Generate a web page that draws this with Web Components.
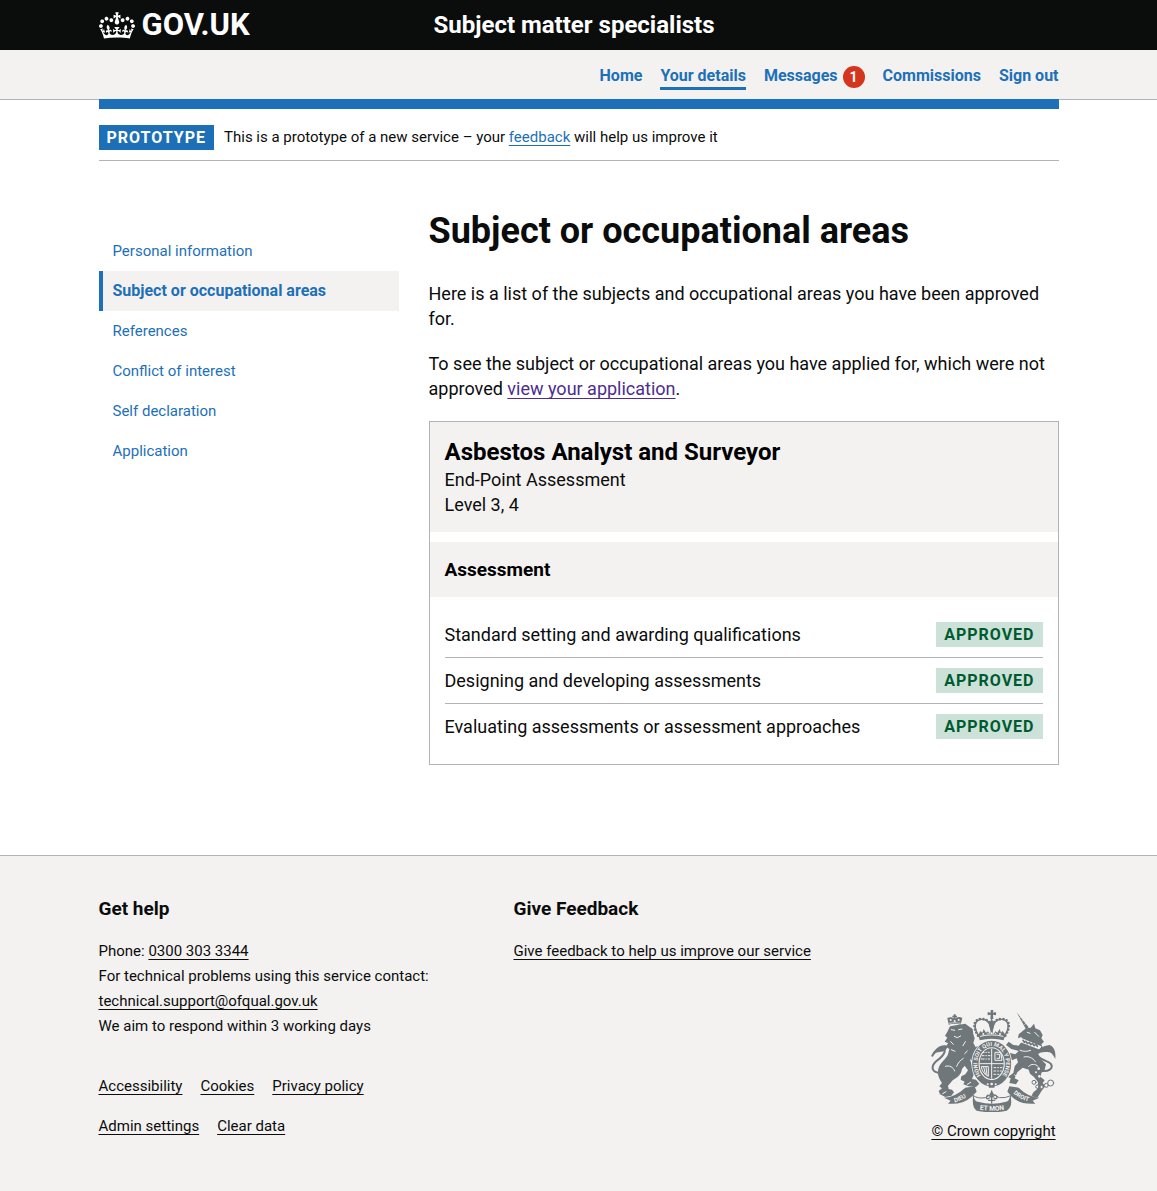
<!DOCTYPE html>
<html lang="en">
<head>
<meta charset="utf-8">
<title>Subject or occupational areas – Subject matter specialists</title>
<meta name="viewport" content="width=device-width, initial-scale=1">
<style>
  :root {
    --ink: #0b0c0c;
    --blue: #1d70b8;
    --grey: #f3f2f1;
    --line: #b1b4b6;
    --purple: #4c2c92;
  }
  body {
    margin: 0;
    min-height: 100vh;
    display: flex;
    flex-direction: column;
    background: #fff;
    color: var(--ink);
    font-family: Roboto, "Liberation Sans", sans-serif;
    font-size: 18px;
    line-height: 25px;
  }
  main { flex: 1 0 auto; }
</style>
</head>
<body>
<site-header service="Subject matter specialists"></site-header>
<account-nav></account-nav>
<phase-banner tag="PROTOTYPE">This is a prototype of a new service – your <text-link href="#feedback" tone="blue">feedback</text-link> will help us improve it</phase-banner>
<main>
  <page-columns>
    <side-nav slot="side"></side-nav>
    <area-content>
      <span slot="title">Subject or occupational areas</span>
      <approval-card name="Asbestos Analyst and Surveyor" group="Assessment">
        <span slot="meta">End-Point Assessment</span>
        <span slot="meta">Level 3, 4</span>
        <approval-row status="APPROVED">Standard setting and awarding qualifications</approval-row>
        <approval-row status="APPROVED">Designing and developing assessments</approval-row>
        <approval-row status="APPROVED">Evaluating assessments or assessment approaches</approval-row>
      </approval-card>
    </area-content>
  </page-columns>
</main>
<site-footer></site-footer>

<script>
const base = `
  *, *::before, *::after { box-sizing: border-box; }
  h1, h2, h3, p, ul { margin: 0; padding: 0; }
  ul { list-style: none; }
  .wrap { max-width: 960px; margin: 0 auto; }
`;

function define(name, markup, setup) {
  const template = document.createElement('template');
  template.innerHTML = markup.trim();
  customElements.define(name, class extends HTMLElement {
    constructor() {
      super();
      this.attachShadow({ mode: 'open' }).append(template.content.cloneNode(true));
    }
    connectedCallback() {
      if (setup) setup(this, this.shadowRoot);
    }
  });
}

define('text-link', `<style>
    :host { display: inline; }
    a { color: var(--ink); text-decoration: underline; text-decoration-thickness: 1px; text-underline-offset: 3px; text-decoration-skip-ink: none; }
    :host([tone="blue"]) a { color: var(--blue); }
    :host([tone="visited"]) a { color: var(--purple); }
  </style><a><slot></slot></a>`, (host, root) => root.querySelector('a').setAttribute('href', host.getAttribute('href') || '#'));

define('gov-crown', `
  <style>:host { display: block; } svg { display: block; }</style>
  <svg width="36" height="27" viewBox="0 0 132 97" aria-hidden="true">
    <path fill="currentColor" fill-rule="evenodd" d="M25 30.2c3.5 1.5 7.7-.2 9.1-3.7 1.5-3.6-.2-7.8-3.9-9.2-3.6-1.4-7.6.3-9.1 3.9-1.4 3.5.3 7.5 3.9 9zM9 39.5c3.6 1.5 7.8-.2 9.2-3.7 1.5-3.6-.2-7.8-3.9-9.1-3.6-1.5-7.6.2-9.1 3.8-1.4 3.5.3 7.5 3.8 9zM4.4 57.2c3.5 1.5 7.7-.2 9.1-3.8 1.5-3.6-.2-7.7-3.9-9.1-3.5-1.5-7.6.3-9.1 3.8-1.4 3.5.3 7.6 3.9 9.1zm38.3-21.4c3.5 1.5 7.7-.2 9.1-3.8 1.5-3.6-.2-7.7-3.9-9.1-3.6-1.5-7.6.3-9.1 3.8-1.3 3.6.4 7.7 3.9 9.1zm64.4-5.6c-3.6 1.5-7.8-.2-9.1-3.7-1.5-3.6.2-7.8 3.8-9.2 3.6-1.4 7.7.3 9.2 3.9 1.3 3.5-.4 7.5-3.9 9zm15.9 9.3c-3.6 1.5-7.7-.2-9.1-3.7-1.5-3.6.2-7.8 3.7-9.1 3.6-1.5 7.7.2 9.2 3.8 1.5 3.5-.3 7.5-3.8 9zm4.7 17.7c-3.6 1.5-7.8-.2-9.2-3.8-1.5-3.6.2-7.7 3.9-9.1 3.6-1.5 7.7.3 9.2 3.8 1.3 3.5-.4 7.6-3.9 9.1zM89.3 35.8c-3.6 1.5-7.8-.2-9.2-3.8-1.4-3.6.2-7.7 3.9-9.1 3.6-1.5 7.7.3 9.2 3.8 1.4 3.6-.3 7.7-3.9 9.1zM69.7 17.7l8.9 4.7V9.3l-8.9 2.8c-.2-.3-.5-.6-.9-.9L72.4 0H59.6l3.5 11.2c-.3.3-.6.5-.9.9l-8.8-2.8v13.1l8.8-4.7c.3.3.6.7.9.9l-5 15.4v.1c-.2.8-.4 1.6-.4 2.4 0 4.1 3.1 7.5 7 8.1h.2c.3 0 .7.1 1 .1.4 0 .7 0 1-.1h.2c4-.6 7.1-4.1 7.1-8.1 0-.8-.1-1.7-.4-2.4V34l-5.1-15.4c.4-.2.7-.6 1-.9zM66 92.8c16.9 0 32.8 1.1 47.1 3.2 4-16.9 8.9-26.7 14-33.5l-9.6-3.4c1 4.9 1.1 7.2 0 10.2-1.5-1.4-3-4.3-4.2-8.7L108.6 76c2.8-2 5-3.2 7.5-3.3-4.4 9.4-10 11.9-13.6 11.2-4.3-.8-6.3-4.6-5.6-7.9 1-4.7 5.7-5.9 8-.5 4.3-8.7-3-11.4-7.6-8.8 7.1-7.2 7.9-13.5 2.1-21.1-8 6.1-8.1 12.3-4.5 20.8-4.7-5.4-12.1-2.5-9.5 6.2 3.4-5.2 7.9-2 7.2 3.1-.6 4.3-6.4 7.8-13.5 7.2-10.3-.9-10.9-8-11.2-13.8 2.5-.5 7.1 1.8 11 7.3L80.2 60c-4.1 4.4-8 5.3-12.3 5.4 1.4-4.4 8-11.6 8-11.6H55.5s6.4 7.2 7.9 11.6c-4.2-.1-8-1-12.3-5.4l1.4 16.4c3.9-5.5 8.5-7.7 10.9-7.3-.3 5.8-.9 12.8-11.1 13.8-7.2.6-12.9-2.9-13.5-7.2-.7-5 3.8-8.3 7.1-3.1 2.7-8.7-4.6-11.6-9.4-6.2 3.7-8.5 3.6-14.7-4.6-20.8-5.8 7.6-5 13.9 2.2 21.1-4.7-2.6-11.9.1-7.7 8.8 2.3-5.5 7.1-4.2 8.1.5.7 3.3-1.3 7.1-5.7 7.9-3.5.7-9-1.8-13.5-11.2 2.5.1 4.7 1.3 7.5 3.3l-4.7-15.4c-1.2 4.4-2.7 7.2-4.3 8.7-1.1-3-.9-5.3 0-10.2l-9.5 3.4c5 6.9 9.9 16.7 14 33.5 14.8-2.1 30.8-3.2 47.7-3.2z"/>
  </svg>
`);

define('site-header', `
  <style>${base}
    :host { display: block; background: var(--ink); color: #fff; }
    .wrap { display: flex; align-items: center; min-height: 50px; }
    .logo { display: flex; flex: 0 0 33.33%; padding-right: 15px; }
    .logo a { display: flex; align-items: center; gap: 7px; color: inherit; text-decoration: none; font-size: 31px; line-height: 30px; font-weight: 700; }
    .name { padding-left: 15px; color: inherit; text-decoration: none; font-size: 24px; line-height: 30px; font-weight: 700; }
  </style>
  <header class="wrap">
    <div class="logo"><a href="#"><gov-crown></gov-crown>GOV.UK</a></div>
    <a class="name" href="#"></a>
  </header>
`, (host, root) => { root.querySelector('.name').textContent = host.getAttribute('service'); });

define('account-nav', `
  <style>${base}
    :host { display: block; background: var(--grey); border-bottom: 1px solid var(--line); }
    ul { display: flex; justify-content: flex-end; gap: 18px; padding: 15px 0 9px; font-size: 16px; line-height: 22px; font-weight: 700; }
    li { display: flex; align-items: flex-start; gap: 5px; }
    a { color: var(--blue); text-decoration: none; border-bottom: 3px solid transparent; }
    a[aria-current] { border-color: var(--blue); }
    .count { width: 22px; height: 22px; margin-top: 1px; border-radius: 50%; background: #d4351c; color: #fff; font-size: 14px; line-height: 22px; text-align: center; }
  </style>
  <nav class="wrap" aria-label="Account">
    <ul>
      <li><a href="#">Home</a></li>
      <li><a href="#" aria-current="true">Your details</a></li>
      <li><a href="#">Messages</a><span class="count">1</span></li>
      <li><a href="#">Commissions</a></li>
      <li><a href="#">Sign out</a></li>
    </ul>
  </nav>
`);

define('status-tag', `
  <style>
    :host { display: block; flex: none; padding: 0 8px; background: #cce2d8; color: #005a30; font-size: 16px; line-height: 25px; font-weight: 700; letter-spacing: 1px; }
    :host([tone="blue"]) { background: var(--blue); color: #fff; }
  </style>
  <slot></slot>
`);

define('phase-banner', `
  <style>${base}
    :host { display: block; margin-top: -1px; }
    .box { display: flex; align-items: center; gap: 10px; padding: 16px 0 10px; border-top: 10px solid var(--blue); border-bottom: 1px solid var(--line); }
    p { font-size: 15px; line-height: 25px; }
  </style>
  <div class="wrap"><div class="box"><status-tag tone="blue"></status-tag><p><slot></slot></p></div></div>
`, (host, root) => { root.querySelector('status-tag').textContent = host.getAttribute('tag'); });

define('page-columns', `
  <style>${base}
    :host { display: block; }
    .wrap { display: grid; grid-template-columns: 10fr 21fr; gap: 30px; padding: 50px 0 90px; }
  </style>
  <div class="wrap"><slot name="side"></slot><slot></slot></div>
`);

define('side-nav', `
  <style>${base}
    :host { display: block; padding-top: 20px; }
    a { display: block; padding: 8px 10px 7px; border-left: 4px solid transparent; color: var(--blue); text-decoration: none; font-size: 15px; line-height: 25px; }
    a[aria-current] { padding: 7px 10px 8px; border-color: var(--blue); background: var(--grey); font-size: 16px; font-weight: 700; }
  </style>
  <nav aria-label="Your details">
    <ul>
      <li><a href="#">Personal information</a></li>
      <li><a href="#" aria-current="page">Subject or occupational areas</a></li>
      <li><a href="#">References</a></li>
      <li><a href="#">Conflict of interest</a></li>
      <li><a href="#">Self declaration</a></li>
      <li><a href="#">Application</a></li>
    </ul>
  </nav>
`);

define('area-content', `
  <style>${base}
    :host { display: block; min-width: 0; }
    h1 { margin-bottom: 30px; font-size: 36px; line-height: 40px; font-weight: 700; }
    p { margin-bottom: 20px; }
  </style>
  <h1><slot name="title"></slot></h1>
  <p>Here is a list of the subjects and occupational areas you have been approved for.</p>
  <p>To see the subject or occupational areas you have applied for, which were not approved <text-link href="#application" tone="visited">view your application</text-link>.</p>
  <slot></slot>
`);

define('approval-card', `
  <style>${base}
    :host { display: block; border: 1px solid var(--line); }
    .head, .group { padding: 15px; background: var(--grey); color: #000; }
    .head { margin-bottom: 10px; }
    h2 { font-size: 24px; line-height: 30px; font-weight: 700; }
    h3 { font-size: 19px; line-height: 25px; font-weight: 700; }
    .meta { color: var(--ink); }
    ::slotted([slot="meta"]) { display: block; }
    .rows { padding: 15px; }
  </style>
  <div class="head"><h2></h2><div class="meta"><slot name="meta"></slot></div></div>
  <div class="group"><h3></h3></div>
  <div class="rows"><slot></slot></div>
`, (host, root) => {
  root.querySelector('h2').textContent = host.getAttribute('name');
  root.querySelector('h3').textContent = host.getAttribute('group');
});

define('approval-row', `
  <style>
    :host { display: flex; justify-content: space-between; align-items: center; gap: 20px; padding: 10px 0; border-bottom: 1px solid var(--line); }
    :host(:last-of-type) { border-bottom: 0; }
  </style>
  <span><slot></slot></span><status-tag></status-tag>
`, (host, root) => { root.querySelector('status-tag').textContent = host.getAttribute('status'); });

define('royal-arms', `
  <style>
    :host { display: block; color: #6f777b; }
    svg { display: block; }
    text { font-family: Roboto, sans-serif; font-weight: 700; fill: #f3f2f1; }
  </style>
  <svg width="125" height="102" viewBox="33 27 375 306" fill="currentColor" stroke-linecap="round" stroke-linejoin="round" role="img" aria-label="Royal coat of arms">
    <!-- lion: tail, body, crown -->
    <path fill="none" stroke="currentColor" stroke-width="6" d="M62 216C34 214 30 196 52 178C76 160 80 144 66 142C54 141 44 152 37 164"/>
    <path d="M82 134C62 128 44 142 34 166C44 154 56 152 66 152C76 150 82 144 82 134Z"/>
    <path d="M90 76L82 92L75 104L82 110L74 122L84 126L78 138L88 144L84 160C78 176 60 184 55 204C50 222 60 236 66 246L58 256L66 262L56 270L60 280L76 288L94 284L102 274L96 266L86 264L84 254L98 238C110 230 124 222 126 204L134 194L144 208L136 220L124 226L122 236L134 242L130 250L146 256L168 258L178 248L168 236L156 234L164 214L156 192L150 176L160 164L158 146L168 140L160 126L164 112L160 100L158 84L146 76L136 68L112 72Z"/>
    <path d="M150 128L162 140L176 134L184 140L176 150L158 160L148 152ZM148 158L164 166L172 178L162 184L150 174Z"/>
    <path fill="none" stroke="#f3f2f1" stroke-width="3" d="M94 86l10 2M116 86l10-2M103 106l9 4l10-5M92 122l8 8M136 122l-7 12M94 146l11 5M142 150l-8 8M130 172c-10 6-16 14-20 24M76 196c12-4 24 2 28 14M78 272l-10 6M152 244l-10 6"/>
    <path d="M86 71L82 51C91 47 97 49 104 54C111 47 119 46 127 51L122 71C110 67 98 67 86 71Z"/>
    <path d="M101 40h6v14h-6zM97 44h14v5H97z"/>
    <g fill="#f3f2f1"><circle cx="92" cy="57" r="3"/><circle cx="104" cy="60" r="3"/><circle cx="116" cy="57" r="3"/></g>
    <path fill="none" stroke="#f3f2f1" stroke-width="2" d="M87 67q17-5 34 0"/>

    <!-- unicorn: horn, head, body, tail, chain -->
    <path d="M290 34L326 79L318 85Z"/>
    <path fill="none" stroke="#f3f2f1" stroke-width="2" d="M300 50l5-4M307 60l6-4M314 70l6-4"/>
    <path d="M318 82L332 80L342 68L346 82L360 88L368 102L364 112L372 122L364 130L370 144L358 148L352 158L362 174L378 190L374 206L364 216L362 228L374 238L368 246L376 256L366 268L352 290L334 286L340 274L352 264L354 244L342 228L330 218L326 206L308 200L292 214L284 232L296 238L288 250L268 246L272 232L264 228L280 216L284 196L294 184L290 172L276 178L264 168L270 156L286 160L296 150L274 144L258 132L266 122L280 132L296 134L308 118L304 108L294 112L296 100Z"/>
    <path fill="#f3f2f1" d="M306 112L364 136L360 146L301 124Z"/>
    <path fill="none" stroke="currentColor" stroke-width="5" d="M309 118l4 6 5-3 4 7 6-4 4 7 6-4 4 7 6-4 4 6"/>
    <path fill="none" stroke="#f3f2f1" stroke-width="3" d="M322 94l8 3M344 94l12 12M300 148c10 4 22 4 32 0M312 168c12-4 26 2 34 14M326 196c8-8 20-8 28 0M284 222l12 8"/>
    <path fill="none" stroke="currentColor" stroke-width="6" d="M366 210C386 212 402 202 392 188C382 178 348 174 352 156C356 142 376 154 390 144"/>
    <path d="M348 164C350 144 370 134 388 132C404 136 408 156 406 174C400 164 396 156 388 154C374 152 358 152 348 164Z"/>
    <g fill="#f3f2f1" stroke="currentColor" stroke-width="3"><circle cx="342" cy="244" r="6"/><circle cx="352" cy="257" r="5"/><circle cx="365" cy="258" r="5"/><circle cx="379" cy="253" r="6"/><circle cx="392" cy="246" r="9"/></g>
    <g fill="#f3f2f1"><circle cx="356" cy="203" r="4"/><circle cx="348" cy="214" r="3"/><circle cx="358" cy="226" r="4"/></g>

    <!-- imperial crown -->
    <path d="M212 27h8l-1 8 9-2v10l-9-2 1 13h-9l1-13-9 2V33l9 2z"/>
    <path fill="none" stroke="currentColor" stroke-width="4" d="M178 108C158 76 164 58 184 55C202 54 212 66 214 94M252 108C272 76 266 58 246 55C228 54 218 66 216 94"/>
    <path fill="none" stroke="currentColor" stroke-width="8" stroke-dasharray="0 10" d="M174 104C156 76 162 54 184 54C202 54 210 62 213 80M256 104C274 76 268 54 246 54C228 54 220 62 217 80"/>
    <path d="M175 100l7-10 5 5 4-11 7 11 6-4 6 9 5-14 5 14 6-9 6 4 7-11 4 11 5-5 7 10-4 18q-36-9-72 0z"/>
    <path d="M215 52l8 18-4 18h-8l-4-18z"/>
    <path fill="none" stroke="#f3f2f1" stroke-width="3" d="M181 106q34-9 68 0"/>
    <g fill="#f3f2f1"><circle cx="190" cy="99" r="3"/><circle cx="204" cy="97" r="2"/><circle cx="215" cy="97" r="3"/><circle cx="226" cy="97" r="2"/><circle cx="240" cy="99" r="3"/></g>

    <!-- garter and quartered shield -->
    <ellipse cx="215" cy="188" rx="61" ry="71" fill="#f3f2f1"/>
    <ellipse cx="215" cy="188" rx="49" ry="59" fill="none" stroke="currentColor" stroke-width="19"/>
    <path id="garter" fill="none" d="M186 227A43 53 0 1 1 244 227"/>
    <text font-size="17"><textPath href="#garter" startOffset="50%" text-anchor="middle">HONI SOIT QUI MAL Y PENSE</textPath></text>
    <ellipse cx="215" cy="188" rx="36" ry="46"/>
    <g fill="none" stroke="#f3f2f1" stroke-width="3">
      <path d="M215 144v88M180 188h70M187 164h23M184 174h25M190 154h18M226 154h16l4 24h-20zM231 160h8v12h-8M222 200h24M222 210h22M222 220h15M184 198q3 20 21 28V198zM191 198l5 20M198 198l3 24"/>
    </g>
    <g stroke="currentColor" stroke-width="3"><path d="M195 150v30M202 150v30M230 195v26M238 195v24"/></g>
    <path d="M203 244l12-6 12 6-4 16h-16z"/>
    <g fill="#f3f2f1"><circle cx="203" cy="250" r="3"/><circle cx="215" cy="249" r="4"/><circle cx="227" cy="250" r="3"/></g>

    <!-- motto scroll -->
    <path fill="#f3f2f1" stroke="currentColor" stroke-width="3" d="M160 284q14 10 36 6l20-12 22 12q18 2 34-6l-6 36q-50 14-100 0z"/>
    <path d="M72 290Q106 288 136 260L164 256L170 272L154 288Q128 312 84 308L92 299Z"/>
    <path d="M358 290Q324 288 296 260L268 256L262 272L276 288Q302 312 346 308L338 299Z"/>
    <path d="M160 284Q164 302 174 302Q216 314 258 302Q268 300 271 284Q280 316 260 329Q216 339 170 329Q154 318 160 284Z"/>
    <path fill="none" stroke="currentColor" stroke-width="4" d="M215 270v36M206 298h18M213 288q-12-12-14 2q2 6 9 1M217 288q12-12 14 2q-2 6-9 1"/>
    <path d="M215 269l6 10-6 14-6-14z"/>
    <path id="scroll-left" fill="none" d="M104 304Q134 297 158 272"/>
    <path id="scroll-mid" fill="none" d="M170 325Q216 333 262 325"/>
    <path id="scroll-right" fill="none" d="M270 268Q298 298 338 304"/>
    <text font-size="18"><textPath href="#scroll-left">DIEU</textPath></text>
    <text font-size="20"><textPath href="#scroll-mid" startOffset="50%" text-anchor="middle">ET MON</textPath></text>
    <text font-size="18"><textPath href="#scroll-right" startOffset="50%" text-anchor="middle">DROIT</textPath></text>
  </svg>
`);

define('site-footer', `
  <style>${base}
    :host { display: block; background: var(--grey); border-top: 1px solid var(--line); font-size: 15px; line-height: 25px; }
    .wrap { display: flex; align-items: flex-end; padding: 40px 0 52px; }
    .main { flex: 1; min-width: 0; }
    .cols { display: grid; grid-template-columns: 1fr 1fr; margin-bottom: 35px; }
    h2 { margin-bottom: 18px; font-size: 19px; line-height: 25px; font-weight: 700; }
    .links { display: flex; gap: 18px; }
    .links + .links { margin-top: 15px; }
    .copy { flex: 0 0 130px; display: flex; flex-direction: column; align-items: center; gap: 7px; margin-bottom: -5px; }
  </style>
  <footer class="wrap">
    <div class="main">
      <div class="cols">
        <section>
          <h2>Get help</h2>
          <p>Phone: <text-link href="tel:03003033344">0300 303 3344</text-link></p>
          <p>For technical problems using this service contact:</p>
          <p><text-link href="mailto:technical.support@ofqual.gov.uk">technical.support@ofqual.gov.uk</text-link></p>
          <p>We aim to respond within 3 working days</p>
        </section>
        <section>
          <h2>Give Feedback</h2>
          <p><text-link href="#feedback">Give feedback to help us improve our service</text-link></p>
        </section>
      </div>
      <ul class="links">
        <li><text-link>Accessibility</text-link></li>
        <li><text-link>Cookies</text-link></li>
        <li><text-link>Privacy policy</text-link></li>
      </ul>
      <ul class="links">
        <li><text-link>Admin settings</text-link></li>
        <li><text-link>Clear data</text-link></li>
      </ul>
    </div>
    <div class="copy"><royal-arms></royal-arms><text-link>© Crown copyright</text-link></div>
  </footer>
`);
</script>
</body>
</html>
